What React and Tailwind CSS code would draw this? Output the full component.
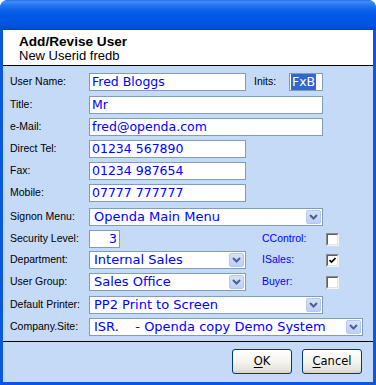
import React from "react";

const LBL = { fontFamily: '"Liberation Sans", Arial, sans-serif' };
const VAL = { fontFamily: '"DejaVu Sans", Verdana, sans-serif' };

function Label({ children }) {
  return (
    <div className="w-[79px] shrink-0 text-[10.5px] text-black" style={LBL}>
      {children}
    </div>
  );
}

function Input({ w, children, right }) {
  return (
    <div
      className={`${w} h-[18px] shrink-0 border border-[#7F9DB9] bg-white flex items-center ${right ? "justify-end pr-[2px]" : "pl-[2px]"} text-[12.5px] leading-[16px] text-[#0000FF] whitespace-nowrap overflow-hidden`}
      style={VAL}
    >
      {children}
    </div>
  );
}

function Combo({ w, children }) {
  return (
    <div
      className={`${w} h-[18px] shrink-0 border border-[#7F9DB9] bg-white flex items-center justify-between pl-[4px] pr-[1px]`}
    >
      <span
        className="text-[13px] leading-[16px] text-[#0000FF] whitespace-pre overflow-hidden"
        style={VAL}
      >
        {children}
      </span>
      <div className="w-[15px] h-[14px] rounded-[2px] border border-[#B6C8F2] bg-[linear-gradient(to_bottom,#D6E2FD,#BCCFFA)] flex items-center justify-center">
        <svg width="9" height="6" viewBox="0 0 9 6">
          <path d="M1 1 L4.5 4.5 L8 1" fill="none" stroke="#4D6185" strokeWidth="2" />
        </svg>
      </div>
    </div>
  );
}

function Check({ checked }) {
  return (
    <div className="w-[13px] h-[13px] border border-t-[#8A8A8A] border-l-[#8A8A8A] border-b-[#F4F4F4] border-r-[#F4F4F4]">
      <div className="w-full h-full border border-t-[#5E5E5E] border-l-[#5E5E5E] border-b-[#E4E2DC] border-r-[#E4E2DC] bg-white flex items-center justify-center">
        {checked && (
          <svg width="7" height="7" viewBox="0 0 7 7">
            <path d="M0.5 3 L2.5 5 L6.5 1" fill="none" stroke="#000" strokeWidth="1.6" />
          </svg>
        )}
      </div>
    </div>
  );
}

function Side({ label, checked }) {
  return (
    <div className="flex items-center ml-[16px]">
      <div className="w-[64px] text-[10.5px] text-[#0000FF]" style={LBL}>
        {label}
      </div>
      <Check checked={checked} />
    </div>
  );
}

function Row({ mt, children }) {
  return <div className={`flex h-[18px] items-center ${mt}`}>{children}</div>;
}

function Btn({ children }) {
  return (
    <div
      className="w-[60px] h-[25px] rounded-[3px] border border-[#003C74] bg-[linear-gradient(to_bottom,#FFFFFF_0%,#F5F4EF_50%,#E6E4DB_85%,#D6D0C5_100%)] flex items-center justify-center text-[11.5px] text-black"
      style={VAL}
    >
      {children}
    </div>
  );
}

export default function App() {
  return (
    <div className="w-[376px] h-[385px] bg-white">
      <div className="w-full h-full flex flex-col rounded-t-[8px] bg-[#0A58E2] overflow-hidden">
        <div className="h-[30px] shrink-0 bg-[linear-gradient(to_bottom,#2A6FE6_0%,#3D8EF8_6%,#2C7BF4_14%,#1266EC_30%,#0058E6_50%,#0055E3_80%,#004CD8_92%,#0043CC_100%)]" />
        <div className="flex-1 flex flex-col px-[3px] pb-[3px]">
          <div className="h-[36px] shrink-0 bg-white border-b border-black pt-[5px] pl-[16px] leading-[14px] text-black" style={LBL}>
            <div className="font-bold text-[13.6px]">Add/Revise User</div>
            <div className="text-[13px]">New Userid fredb</div>
          </div>
          <div className="h-[276px] shrink-0 bg-[#C5DAF7] border-b border-black pt-[7px] pl-[7px]">
            <Row mt="">
              <Label>User Name:</Label>
              <Input w="w-[157px]">Fred Bloggs</Input>
              <div className="ml-[8px] w-[35px] text-[10.5px]" style={LBL}>Inits:</div>
              <div className="w-[34px] h-[18px] border border-[#7F9DB9] bg-white pl-[1px] flex items-stretch">
                <div className="h-[16px] bg-[#316AC5] text-white text-[12.5px] leading-[16px] px-[1px]" style={VAL}>FxB</div>
              </div>
            </Row>
            <Row mt="mt-[5px]">
              <Label>Title:</Label>
              <Input w="w-[234px]">Mr</Input>
            </Row>
            <Row mt="mt-[4px]">
              <Label>e-Mail:</Label>
              <Input w="w-[234px]">fred@openda.com</Input>
            </Row>
            <Row mt="mt-[4px]">
              <Label>Direct Tel:</Label>
              <Input w="w-[157px]">01234 567890</Input>
            </Row>
            <Row mt="mt-[4px]">
              <Label>Fax:</Label>
              <Input w="w-[157px]">01234 987654</Input>
            </Row>
            <Row mt="mt-[4px]">
              <Label>Mobile:</Label>
              <Input w="w-[157px]">07777 777777</Input>
            </Row>
            <Row mt="mt-[6px]">
              <Label>Signon Menu:</Label>
              <Combo w="w-[234px]">Openda Main Menu</Combo>
            </Row>
            <Row mt="mt-[4px]">
              <Label>Security Level:</Label>
              <div className="w-[157px] shrink-0">
                <Input w="w-[31px]" right>3</Input>
              </div>
              <Side label="CControl:" />
            </Row>
            <Row mt="mt-[3px]">
              <Label>Department:</Label>
              <Combo w="w-[157px]">Internal Sales</Combo>
              <Side label="ISales:" checked />
            </Row>
            <Row mt="mt-[4px]">
              <Label>User Group:</Label>
              <Combo w="w-[157px]">Sales Office</Combo>
              <Side label="Buyer:" />
            </Row>
            <Row mt="mt-[5px]">
              <Label>Default Printer:</Label>
              <Combo w="w-[234px]">PP2 Print to Screen</Combo>
            </Row>
            <Row mt="mt-[4px]">
              <Label>Company.Site:</Label>
              <Combo w="w-[274px]">{"ISR.    - Openda copy Demo System"}</Combo>
            </Row>
          </div>
          <div className="flex-1 bg-[#C5DAF7] flex justify-end items-start gap-[10px] pt-[7px] pr-[11px]">
            <Btn>
              <span className="underline underline-offset-2">O</span>K
            </Btn>
            <Btn>
              <span className="underline underline-offset-2">C</span>ancel
            </Btn>
          </div>
        </div>
      </div>
    </div>
  );
}
